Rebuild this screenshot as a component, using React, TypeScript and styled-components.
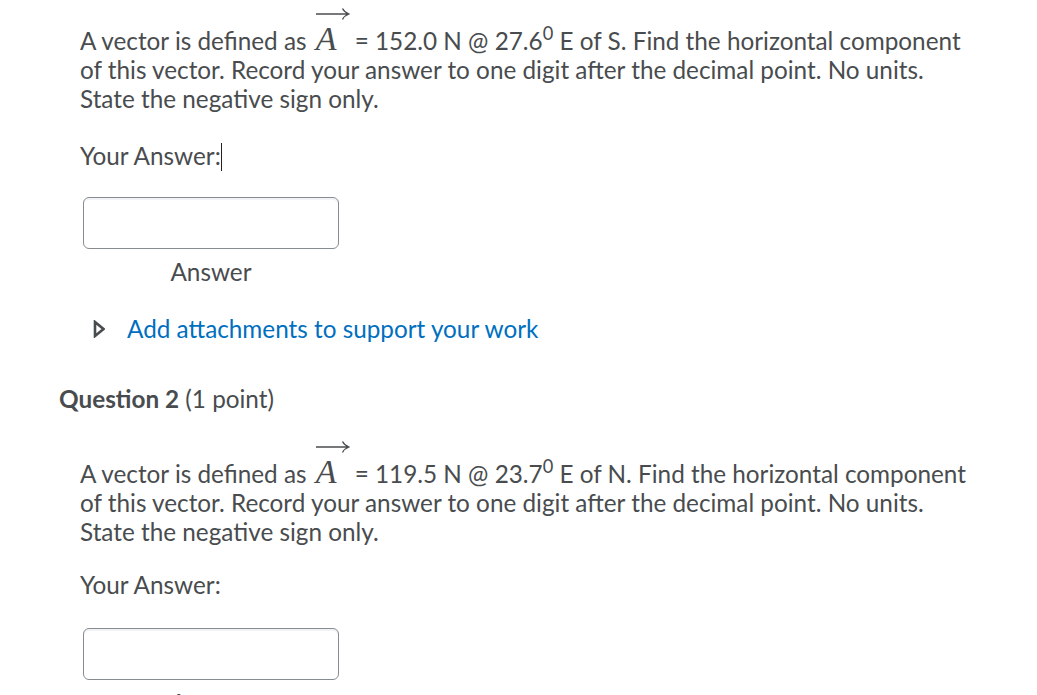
import styled, { createGlobalStyle } from 'styled-components';

const GlobalStyle = createGlobalStyle`
  body {
    margin: 0;
    background: #ffffff;
    font-family: Lato, 'Open Sans', sans-serif;
    color: #494c4e;
  }
`;

const Page = styled.div`
  padding: 2px 0 0 59px;
  font-size: 24.3px;
  line-height: 29px;
`;

const QuestionBody = styled.div`
  padding-left: 21px;
`;

const Prompt = styled.p`
  margin: 0;

  sup {
    font-size: 0.75em;
    line-height: 0;
    vertical-align: 0.55em;
  }
`;

const Vec = styled.span`
  display: inline-block;
  vertical-align: baseline;
  margin: 0 5px 0 3px;

  svg {
    display: block;
  }
`;

const VecLetter = styled.span`
  display: block;
  font-family: 'Liberation Serif', 'DejaVu Serif', serif;
  font-style: italic;
  font-size: 34px;
  line-height: 33px;
  color: #494c4e;
`;

const FieldLabel = styled.div<{ $top: number }>`
  margin-top: ${(p) => p.$top}px;
`;

const Caret = styled.span`
  display: inline-block;
  width: 1px;
  height: 28px;
  background: #222;
  vertical-align: -6px;
`;

const AnswerInput = styled.input<{ $top: number }>`
  display: block;
  box-sizing: border-box;
  width: 256px;
  height: 52px;
  margin: ${(p) => p.$top}px 0 0 3px;
  border: 1px solid #868c8f;
  border-radius: 6px;
  background: #ffffff;
  box-shadow: inset 0 2px 0 0 rgba(185, 194, 208, 0.2);
  outline: none;
`;

const AnswerCaption = styled.div`
  width: 256px;
  margin: 8px 0 0 3px;
  text-align: center;
`;

const AttachRow = styled.div`
  display: flex;
  align-items: center;
  gap: 22px;
  margin-top: 28px;
  padding-left: 13px;
  cursor: pointer;

  svg {
    flex-shrink: 0;
  }
`;

const AttachLink = styled.a`
  color: #006fbf;
  text-decoration: none;
`;

const QuestionTitle = styled.h2`
  margin: 41px 0 22px;
  font-size: 24.3px;
  line-height: 29px;
  font-weight: 400;
  color: #494c4e;

  strong {
    font-weight: 700;
  }
`;

const VectorA = () => (
  <Vec>
    <svg width="34" height="20" viewBox="0 0 34 20">
      <path
        d="M0 12 H32 M26.5 6.5 Q28.5 10.5 33 12 Q28.5 13.5 26.5 17.5"
        stroke="#494c4e"
        strokeWidth="1.3"
        fill="none"
      />
    </svg>
    <VecLetter>A</VecLetter>
  </Vec>
);

type QuestionProps = {
  magnitude: string;
  angle: string;
  from: string;
  withCaret?: boolean;
  showAttach?: boolean;
  labelTop: number;
  inputTop: number;
};

const Question = ({ magnitude, angle, from, withCaret, showAttach, labelTop, inputTop }: QuestionProps) => (
  <QuestionBody>
    <Prompt>
      A vector is defined as <VectorA />= {magnitude} N @ {angle}
      <sup>0</sup> E of {from}. Find the horizontal component
      <br />
      of this vector. Record your answer to one digit after the decimal point. No units.
      <br />
      State the negative sign only.
    </Prompt>
    <FieldLabel $top={labelTop}>
      Your Answer:{withCaret && <Caret />}
    </FieldLabel>
    <AnswerInput $top={inputTop} type="text" aria-label="Answer" />
    <AnswerCaption>Answer</AnswerCaption>
    {showAttach && (
      <AttachRow>
        <svg width="12" height="18" viewBox="0 0 12 18">
          <path d="M2 2 L10.5 9 L2 16 Z" stroke="#494c4e" strokeWidth="2.6" fill="none" strokeLinejoin="miter" />
        </svg>
        <AttachLink>Add attachments to support your work</AttachLink>
      </AttachRow>
    )}
  </QuestionBody>
);

export default function App() {
  return (
    <>
      <GlobalStyle />
      <Page>
        <Question magnitude="152.0" angle="27.6" from="S" withCaret showAttach labelTop={28} inputTop={26} />
        <QuestionTitle>
          <strong>Question 2</strong> (1 point)
        </QuestionTitle>
        <Question magnitude="119.5" angle="23.7" from="N" labelTop={24} inputTop={29} />
      </Page>
    </>
  );
}
